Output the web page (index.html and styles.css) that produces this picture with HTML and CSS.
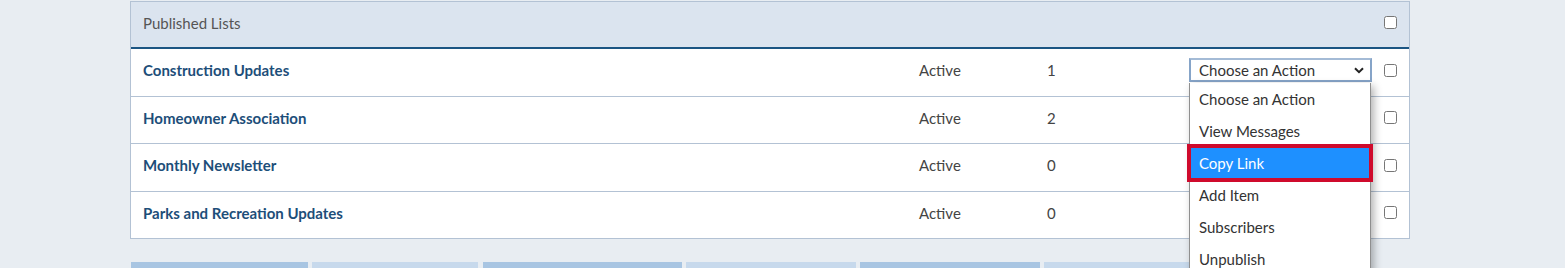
FILE: index.html
```html
<!DOCTYPE html>
<html>
<head>
<meta charset="utf-8">
<link rel="stylesheet" href="styles.css">
</head>
<body>
<div class="page">
  <div class="panel">
    <div class="head">
      <div class="head-title">Published Lists</div>
      <div class="cell-check"><input type="checkbox"></div>
    </div>
    <div class="row">
      <div class="cell-name">Construction Updates</div>
      <div class="cell-status">Active</div>
      <div class="cell-count">1</div>
      <div class="cell-action">
        <div class="select">
          <span>Choose an Action</span>
          <svg class="chev" width="10" height="7" viewBox="0 0 10 7"><path d="M1 1.2 L5 5.2 L9 1.2" fill="none" stroke="#222" stroke-width="2"/></svg>
        </div>
        <ul class="menu">
          <li>Choose an Action</li>
          <li>View Messages</li>
          <li class="hl">Copy Link</li>
          <li>Add Item</li>
          <li>Subscribers</li>
          <li>Unpublish</li>
        </ul>
      </div>
      <div class="cell-check"><input type="checkbox"></div>
    </div>
    <div class="row">
      <div class="cell-name">Homeowner Association</div>
      <div class="cell-status">Active</div>
      <div class="cell-count">2</div>
      <div class="cell-action"></div>
      <div class="cell-check"><input type="checkbox"></div>
    </div>
    <div class="row">
      <div class="cell-name">Monthly Newsletter</div>
      <div class="cell-status">Active</div>
      <div class="cell-count">0</div>
      <div class="cell-action"></div>
      <div class="cell-check"><input type="checkbox"></div>
    </div>
    <div class="row last">
      <div class="cell-name">Parks and Recreation Updates</div>
      <div class="cell-status">Active</div>
      <div class="cell-count">0</div>
      <div class="cell-action"></div>
      <div class="cell-check"><input type="checkbox"></div>
    </div>
  </div>
  <div class="tabs">
    <div class="tab dark t1"></div>
    <div class="tab light t2"></div>
    <div class="tab dark t3"></div>
    <div class="tab light t4"></div>
    <div class="tab dark t5"></div>
    <div class="tab light t6"></div>
  </div>
</div>
</body>
</html>
```
FILE: styles.css
```css
html, body {
  margin: 0;
  padding: 0;
  background: #e8edf2;
  font-family: "Lato", "Open Sans", sans-serif;
  font-size: 15px;
  color: #444;
  overflow: hidden;
}
.page {
  padding-top: 1px;
  padding-left: 130px;
  width: 1280px;
}
.panel {
  border: 1px solid #b3c2d4;
  background: #fff;
}
.head {
  display: grid;
  grid-template-columns: 1241px 37px;
  height: 41px;
  padding-bottom: 4px;
  align-items: center;
  background: #dbe4ef;
  border-bottom: 2px solid #1b5583;
}
.head-title {
  padding-left: 12px;
  color: #555;
}
.row {
  display: grid;
  grid-template-columns: 776px 128px 142px 195px 37px;
  height: 42.5px;
  padding-bottom: 4px;
  align-items: center;
  border-bottom: 1px solid #b3c2d4;
}
.row.last {
  border-bottom: none;
}
.cell-name {
  padding-left: 12px;
  font-weight: 700;
  color: #1d4e79;
}
.cell-status, .cell-count {
  padding-left: 12px;
  color: #444;
}
.cell-action {
  padding-left: 12px;
  position: relative;
  height: 100%;
  display: flex;
  align-items: center;
}
.cell-check {
  padding-left: 12px;
  display: flex;
  align-items: center;
}
.cell-check input {
  margin: 0;
  width: 13px;
  height: 13px;
}
.select {
  box-sizing: border-box;
  width: 184px;
  height: 24px;
  border: 2px solid #86a4c8;
  border-top-color: #a4bbd6;
  background: #fff;
  display: flex;
  align-items: center;
  justify-content: space-between;
  padding: 0 6px 0 8px;
  color: #333;
}
.chev {
  display: block;
}
.menu {
  position: absolute;
  left: 12px;
  top: 34px;
  width: 182px;
  box-sizing: border-box;
  margin: 0;
  padding: 0;
  list-style: none;
  background: #fff;
  border: 1px solid #8f8f8f;
  border-top: none;
  box-shadow: 3px 3px 8px rgba(0, 0, 0, 0.3);
  z-index: 5;
}
.menu li {
  height: 32px;
  line-height: 32px;
  padding-left: 9px;
  color: #333;
}
.menu li.hl {
  background: #1e90ff;
  color: #fff;
  outline: 4px solid #cf0a2c;
  outline-offset: -1px;
  position: relative;
}
.tabs {
  display: flex;
  gap: 4px;
  margin-top: 23px;
  padding-left: 1px;
}
.tab {
  height: 10px;
}
.dark { background: #a8c5e2; }
.light { background: #c7d9ec; }
.t1 { width: 177px; }
.t2 { width: 166px; margin-right: 1px; }
.t3 { width: 199px; }
.t4 { width: 170px; }
.t5 { width: 180px; }
.t6 { width: 180px; }
```
